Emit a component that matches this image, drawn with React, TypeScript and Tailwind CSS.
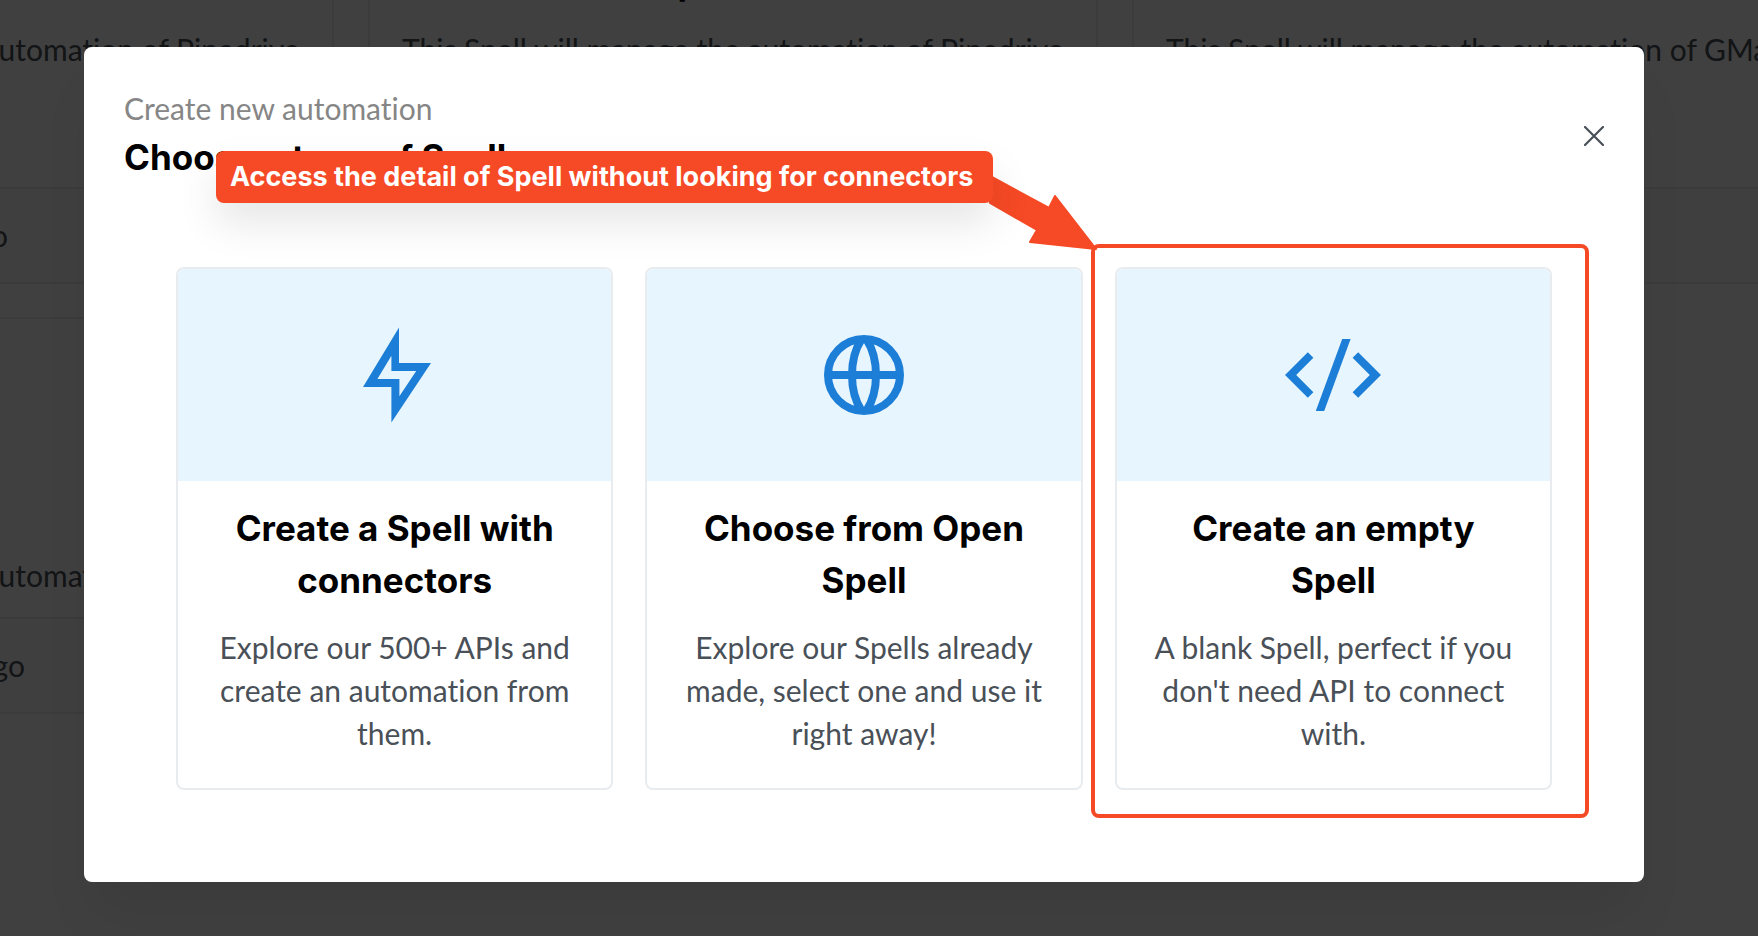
import type { ReactNode } from 'react';

const BODY = "font-['Lato','Open_Sans',sans-serif]";
const HEADING = "font-['Inter','Liberation_Sans',sans-serif]";

function BoltIcon() {
  return (
    <svg viewBox="0 0 24 24" className="size-24" fill="currentColor" aria-hidden="true">
      <path
        fillRule="evenodd"
        d="M13 0.1V9H21L11.1 23.9V15H4L13 0.1ZM11.1 7.2L7.6 13H13.1V17.3L17.3 11H11.1V7.2Z"
      />
    </svg>
  );
}

function GlobeIcon() {
  return (
    <svg viewBox="0 0 24 24" className="size-24" fill="none" stroke="currentColor" strokeWidth="2" aria-hidden="true">
      <circle cx="12" cy="12" r="9" />
      <path d="M3 12H21" />
      <path d="M11.4 3C8.2 8 8.2 16 11.4 21" />
      <path d="M12.6 3C15.8 8 15.8 16 12.6 21" />
    </svg>
  );
}

function CodeIcon() {
  return (
    <svg viewBox="0 0 24 24" className="size-24" fill="currentColor" aria-hidden="true">
      <path d="M14.3 3H16.4L9.8 21H7.7L14.3 3Z" />
      <path d="M0 12L5.7 6.3L7.1 7.7L2.8 12L7.1 16.3L5.7 17.7L0 12Z" />
      <path d="M24 12L18.3 6.3L16.9 7.7L21.2 12L16.9 16.3L18.3 17.7L24 12Z" />
    </svg>
  );
}

function SpellCard({ title, text, age, ageWidth }: { title: string; text: string; age: string; ageWidth: string }) {
  return (
    <article className="flex flex-col rounded-lg border-2 border-[#e9ecef] bg-white">
      <div className="flex-1 px-8 pt-[163px] pb-5">
        <h3 className={`${HEADING} text-[35px] leading-[52px] font-bold text-black`}>{title}</h3>
        <p className={`${BODY} mt-5 whitespace-nowrap text-[30px] leading-[43px] text-[#495057] [font-variant-ligatures:none]`}>{text}</p>
      </div>
      <footer className="border-t-2 border-[#e9ecef] bg-[#fcfcfc] py-[25px]">
        <p className={`${ageWidth} ${BODY} text-right text-[30px] leading-[43px] text-[#495057]`}>{age}</p>
      </footer>
    </article>
  );
}

function Choice({ icon, title, text, highlighted }: { icon: ReactNode; title: string; text: string; highlighted?: boolean }) {
  return (
    <li className="relative flex">
      <button type="button" className="flex w-full flex-col overflow-hidden rounded-lg border-2 border-[#e9ecef] bg-white text-center">
        <span className="flex h-[212px] w-full items-center justify-center bg-[#e7f5ff] text-[#1c7ed6]">{icon}</span>
        <span className="flex w-full flex-col gap-5 px-8 pt-[21px] pb-[33px]">
          <span className={`${HEADING} text-[35px] leading-[52px] font-bold text-black`}>{title}</span>
          <span className={`${BODY} text-[30px] leading-[43px] text-[#495057] [font-variant-ligatures:none]`}>{text}</span>
        </span>
      </button>
      {highlighted && (
        <div className="pointer-events-none absolute -top-[23px] -right-[37px] -bottom-7 -left-6 rounded-lg border-4 border-[#f64925]">
          <svg
            viewBox="0 0 112 80"
            className="absolute -top-[75px] -left-[107px] h-20 w-28"
            fill="#f64925"
            stroke="#f64925"
            strokeWidth="2"
            strokeLinejoin="round"
            aria-hidden="true"
          >
            <path d="M2 3L61 35L67 23L108 76L42 69L49 57L2 30Z" />
          </svg>
        </div>
      )}
    </li>
  );
}

export default function App() {
  return (
    <div className="relative h-screen overflow-hidden bg-white">
      <main className="-mt-[209px] -ml-[396px] grid grid-cols-[repeat(3,730px)] grid-rows-[493px_397px] gap-x-[34px] gap-y-[33px]">
        <SpellCard title="Pipedrive" text="This Spell will manage the automation of Pipedrive" age="2 months ago" ageWidth="w-[402px]" />
        <SpellCard title="Create deal in Pipedrive" text="This Spell will manage the automation of Pipedrive" age="2 months ago" ageWidth="w-[402px]" />
        <SpellCard title="Mail" text="This Spell will manage the automation of GMail" age="2 months ago" ageWidth="w-[402px]" />
        <SpellCard title="Pipedrive" text="This Spell will manage the automation of Pipedrive" age="2 months ago" ageWidth="w-[419px]" />
      </main>

      <div className="absolute inset-0 flex items-start bg-black/75 pt-[47px] pr-[114px] pl-[84px]">
        <section
          role="dialog"
          aria-modal="true"
          aria-labelledby="dialog-title"
          className="relative w-full rounded-lg bg-white px-10 pt-10 pb-[92px] shadow-[0_40px_50px_-10px_rgba(0,0,0,0.08)]"
        >
          <header className="flex items-center justify-between">
            <div>
              <p className={`${BODY} text-[30px] leading-[43px] text-[#868686] [font-variant-ligatures:none]`}>Create new automation</p>
              <h2 id="dialog-title" className={`${HEADING} text-[35px] leading-[54px] font-bold text-black`}>
                Choose a type of Spell
              </h2>
            </div>
            <button type="button" aria-label="Close" className="text-[#495057]">
              <svg viewBox="0 0 20 20" className="size-5" stroke="currentColor" strokeWidth="2.2" strokeLinecap="round" aria-hidden="true">
                <path d="M1 1L19 19M19 1L1 19" />
              </svg>
            </button>
          </header>

          <ul className="mx-[52px] mt-[83px] grid grid-cols-3 gap-8">
            <Choice
              icon={<BoltIcon />}
              title="Create a Spell with connectors"
              text="Explore our 500+ APIs and create an automation from them."
            />
            <Choice
              icon={<GlobeIcon />}
              title="Choose from Open Spell"
              text="Explore our Spells already made, select one and use it right away!"
            />
            <Choice
              icon={<CodeIcon />}
              title="Create an empty Spell"
              text="A blank Spell, perfect if you don't need API to connect with."
              highlighted
            />
          </ul>

          <div
            role="note"
            className={`${HEADING} absolute top-[104px] left-[132px] rounded-lg bg-[#f64925] pr-5 pl-[14px] text-[27px] leading-[52px] font-bold whitespace-nowrap text-white shadow-[0_20px_40px_rgba(0,0,0,0.1)]`}
          >
            Access the detail of Spell without looking for connectors
          </div>
        </section>
      </div>
    </div>
  );
}
